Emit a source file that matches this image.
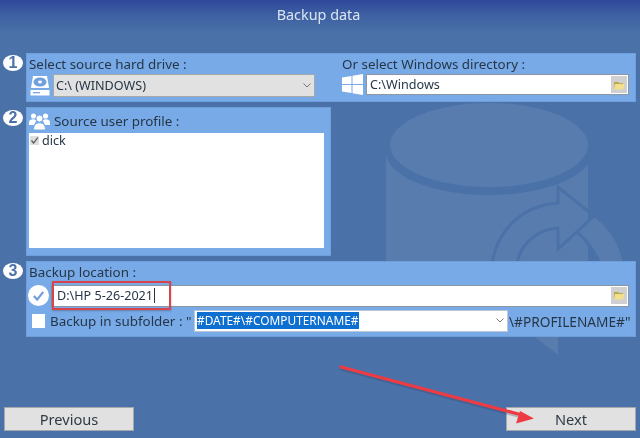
<template>
  <div class="page">
    <svg class="mark" viewBox="0 0 640 438" width="640" height="438" aria-hidden="true">
      <path d="M386 150H588V300H386Z" fill="#587cae" />
      <ellipse cx="489" cy="152" rx="103" ry="43" fill="#4a72a8" />
      <ellipse cx="489" cy="145" rx="99" ry="42" fill="#587cae" />
      <path d="M593 216Q618 235 623 264H600Q592 245 577 232Z" fill="#587cae" />
      <path d="M577 232Q592 245 600 264" fill="none" stroke="#4a72a8" stroke-width="3" />
      <path d="M492 264C497 228 525 205 558 203V187L594 216L558 249V228C538 229 520 244 517 264" fill="none" stroke="#4a72a8" stroke-width="3" />
      <path d="M535 337H558V355Z" fill="#587cae" />
    </svg>

    <header class="title">Backup data</header>

    <main class="steps">
      <section class="step">
        <span class="badge">1</span>
        <div class="panel panel-source">
          <div class="col col-left">
            <div class="label">Select source hard drive :</div>
            <div class="row">
              <svg class="icon" viewBox="0 0 22 23" width="22" height="23">
                <path d="M4 2H18L20 14H2Z" fill="#fff" />
                <ellipse cx="11" cy="8" rx="6.5" ry="4.6" fill="#6f9fdd" />
                <ellipse cx="11" cy="8" rx="2" ry="1.4" fill="#fff" />
                <path d="M1.5 16H20.5V21.5H1.5Z" fill="#fff" />
                <path d="M4 18.7H11" stroke="#6f9fdd" stroke-width="1.2" />
              </svg>
              <div class="select select-gray">
                <span class="select-text">C:\ (WINDOWS)</span>
                <svg class="chev" viewBox="0 0 8 5" width="8" height="5"><path d="M.5 .5L4 4L7.5 .5" fill="none" stroke="#777" stroke-width="1" /></svg>
              </div>
            </div>
          </div>
          <div class="col col-right">
            <div class="label">Or select Windows directory :</div>
            <div class="row">
              <svg class="icon icon-win" viewBox="0 0 21 21" width="21" height="21">
                <path d="M0 3.5L9.5 2V10H0ZM10.5 1.8L21 0V10H10.5ZM0 11H9.5V19L0 17.6ZM10.5 11H21V21L10.5 19.2Z" fill="#fff" />
              </svg>
              <div class="field field-win">
                <span>C:\Windows</span>
                <span class="browse">
                  <svg viewBox="0 0 12 10" width="12" height="10"><path d="M1 2H5L6 3H10V9H1Z" fill="#b9a94e" /><path d="M2 4H11.5L10 9.5H1Z" fill="#f2e08e" /></svg>
                </span>
              </div>
            </div>
          </div>
        </div>
      </section>

      <section class="step">
        <span class="badge badge-low">2</span>
        <div class="panel panel-profile">
          <div class="profile-head">
            <svg class="users" viewBox="0 0 21 18" width="21" height="18">
              <circle cx="4.5" cy="4" r="2.6" fill="#fff" /><circle cx="16.5" cy="4" r="2.6" fill="#fff" />
              <path d="M0 11C0 8 2 7.3 4.5 7.3C6 7.3 7 8 7 9L5 13H0ZM21 11C21 8 19 7.3 16.5 7.3C15 7.3 14 8 14 9L16 13H21Z" fill="#fff" />
              <circle cx="10.5" cy="6.5" r="3.5" fill="#fff" stroke="#78aae8" />
              <path d="M4.5 18C4.5 13 7 10.8 10.5 10.8C14 10.8 16.5 13 16.5 18Z" fill="#fff" stroke="#78aae8" />
            </svg>
            <span class="label">Source user profile :</span>
          </div>
          <div class="list">
            <div class="list-item">
              <span class="mini-check">
                <svg viewBox="0 0 9 9" width="9" height="9"><path d="M1.5 4.5L3.6 7L7.8 1.6" fill="none" stroke="#555" stroke-width="1.2" /></svg>
              </span>
              <span>dick</span>
            </div>
          </div>
        </div>
      </section>

      <section class="step">
        <span class="badge">3</span>
        <div class="panel panel-location">
          <div class="label">Backup location :</div>
          <div class="row location-row">
            <span class="ok">
              <svg viewBox="0 0 21 21" width="21" height="21">
                <circle cx="10.5" cy="10.5" r="10.5" fill="#fff" />
                <path d="M5.8 11L9.2 14.6L15.2 6.8" fill="none" stroke="#6f9fdd" stroke-width="2.2" />
              </svg>
            </span>
            <div class="field field-path">
              <span class="path-text">D:\HP 5-26-2021</span>
              <i class="caret"></i>
              <span class="browse">
                <svg viewBox="0 0 12 10" width="12" height="10"><path d="M1 2H5L6 3H10V9H1Z" fill="#b9a94e" /><path d="M2 4H11.5L10 9.5H1Z" fill="#f2e08e" /></svg>
              </span>
              <span class="callout"></span>
            </div>
          </div>
          <div class="row sub-row">
            <span class="box"></span>
            <span class="sub-label">Backup in subfolder : "</span>
            <div class="select select-white">
              <span class="selected">#DATE#\#COMPUTERNAME#</span>
              <svg class="chev" viewBox="0 0 8 5" width="8" height="5"><path d="M.5 .5L4 4L7.5 .5" fill="none" stroke="#777" stroke-width="1" /></svg>
            </div>
            <span class="suffix">\#PROFILENAME#"</span>
          </div>
        </div>
      </section>
    </main>

    <footer class="actions">
      <button class="btn" type="button">Previous</button>
      <button class="btn" type="button">Next</button>
    </footer>

    <svg class="arrow" viewBox="0 0 640 438" width="640" height="438" aria-hidden="true">
      <path d="M341 367L522 415" fill="none" stroke="#2b3f63" stroke-opacity=".28" stroke-width="3.5" stroke-linecap="round" transform="translate(1 2)" />
      <path d="M341 367L522 415" fill="none" stroke="#ee3b43" stroke-width="3.2" stroke-linecap="round" />
      <path d="M534 418.5L516 423.5L520 411Z" fill="#ee3b43" />
    </svg>
  </div>
</template>

<style>
html, body { margin: 0; background: #4a72a8; }
</style>

<style scoped>
.page {
  position: relative;
  width: 640px;
  height: 438px;
  overflow: hidden;
  display: flex;
  flex-direction: column;
  background: linear-gradient(#2f479a 0, #3d5fa2 14px, #4a72a8 34px, #4a72a8 100%);
  font-family: "Noto Sans", "Open Sans", sans-serif;
  font-size: 13.4px;
  color: #263646;
  filter: blur(0.45px);
}
.mark, .arrow { position: absolute; left: 0; top: 0; pointer-events: none; }
.arrow { z-index: 3; }
.title {
  position: relative;
  height: 53px;
  box-sizing: border-box;
  padding: 5px 0 0 0;
  text-align: center;
  color: #dbe6f2;
  font-size: 14.4px;
  line-height: 20px;
  margin-left: -3px;
}
.steps {
  position: relative;
  display: flex;
  flex-direction: column;
  gap: 5px;
}
.step { display: flex; align-items: flex-start; padding-left: 3px; }
.badge {
  flex: none;
  width: 20px;
  height: 16px;
  margin: 2px 3px 0 0;
  border-radius: 50%;
  background: #fff;
  color: #4a72a8;
  font: 700 16px/16px "Liberation Sans", sans-serif;
  text-align: center;
}
.badge-low { margin-top: 3px; }
.panel {
  box-sizing: border-box;
  background: #78aae8;
  border: 1px solid #6f9fdb;
}
.panel-source {
  display: flex;
  width: 610px;
  height: 49px;
}
.col { display: flex; flex-direction: column; }
.col-left { width: 312px; padding: 1px 0 0 2px; box-sizing: border-box; }
.col-right { padding: 1px 0 0 3px; }
.label { line-height: 19px; height: 19px; white-space: nowrap; }
.row { display: flex; align-items: center; }
.icon { flex: none; }
.select {
  box-sizing: border-box;
  display: flex;
  align-items: center;
  justify-content: space-between;
  border: 1px solid #a7a7a7;
  line-height: 20px;
  font-size: 12.6px;
}
.select-gray {
  width: 262px;
  height: 23px;
  margin-left: 2px;
  padding: 0 3px 0 2px;
  background: #e1e1e1;
}
.select-text { padding-top: 1px; }
.chev { flex: none; }
.field {
  position: relative;
  box-sizing: border-box;
  height: 21px;
  background: #fff;
  border: 1px solid #8d96a3;
  line-height: 20px;
  padding-left: 3px;
  white-space: nowrap;
  font-size: 12.6px;
}
.field-win { width: 263px; margin-left: 3px; }
.browse {
  position: absolute;
  right: 1px;
  top: 1px;
  width: 16px;
  height: 17px;
  display: flex;
  align-items: center;
  justify-content: center;
  background: #d0d0d0;
}
.panel-profile {
  width: 305px;
  height: 149px;
  padding: 1px 0 0 2px;
}
.profile-head { display: flex; align-items: center; height: 24px; gap: 4px; }
.users { flex: none; }
.list {
  box-sizing: border-box;
  width: 295px;
  height: 115px;
  background: #fff;
  padding: 1px 0 0 1px;
  font-size: 12.6px;
}
.list-item { display: flex; align-items: center; gap: 3px; height: 13px; line-height: 13px; }
.mini-check {
  width: 9px;
  height: 9px;
  display: block;
  background: #dedede;
}
.mini-check svg { display: block; }
.panel-location {
  width: 610px;
  height: 76px;
  padding: 0 0 0 2px;
}
.panel-location > .label { height: 22px; line-height: 20px; }
.location-row { height: 23px; gap: 2px; }
.ok { flex: none; height: 21px; margin-left: -1px; }
.ok svg { display: block; }
.field-path { width: 578px; height: 22px; padding-left: 5px; line-height: 20px; display: flex; align-items: center; }
.path-text { color: #263646; }
.caret { display: block; width: 1px; height: 15px; margin-left: 1px; background: #263646; }
.callout {
  position: absolute;
  left: 0;
  top: -5px;
  width: 119px;
  height: 29px;
  box-sizing: border-box;
  border: 2px solid #d9434a;
  box-shadow: 0 1px 2px rgba(60, 40, 50, .35);
}
.sub-row { height: 23px; margin-top: 2px; }
.box { flex: none; width: 13px; height: 14px; margin-left: 3px; background: #fff; }
.sub-label { margin-left: 5px; width: 144px; white-space: nowrap; padding-top: 1px; }
.select-white {
  flex: none;
  width: 314px;
  height: 22px;
  background: #fff;
  padding: 0 3px 0 2px;
  border-color: #bcc6d4;
}
.selected {
  background: #0d6fd0;
  color: #fff;
  line-height: 17px;
  font-size: 11.9px;
  padding-right: 1px;
}
.suffix { margin-left: 1px; white-space: nowrap; font-size: 13.7px; padding-top: 1px; }
.actions {
  position: relative;
  margin-top: auto;
  display: flex;
  justify-content: space-between;
  padding: 0 4px 7px;
}
.btn {
  box-sizing: border-box;
  width: 130px;
  height: 24px;
  border: 1px solid #a4a8ac;
  background: #e1e1e1;
  color: #2e3a46;
  font: 14.6px/20px "Noto Sans", "Open Sans", sans-serif;
  padding: 0;
}
</style>
